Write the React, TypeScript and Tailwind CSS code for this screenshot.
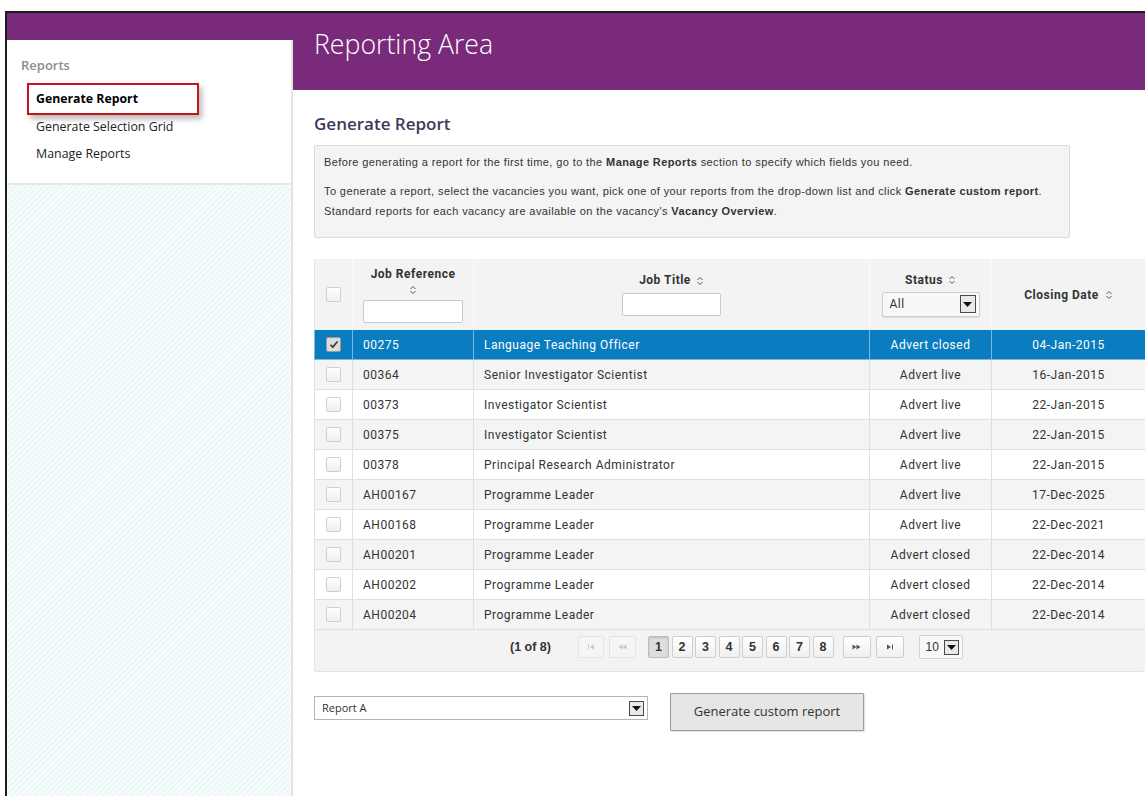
import React from "react";

type Row = { ref: string; title: string; status: string; date: string };

const rows: Row[] = [
  { ref: "00275", title: "Language Teaching Officer", status: "Advert closed", date: "04-Jan-2015" },
  { ref: "00364", title: "Senior Investigator Scientist", status: "Advert live", date: "16-Jan-2015" },
  { ref: "00373", title: "Investigator Scientist", status: "Advert live", date: "22-Jan-2015" },
  { ref: "00375", title: "Investigator Scientist", status: "Advert live", date: "22-Jan-2015" },
  { ref: "00378", title: "Principal Research Administrator", status: "Advert live", date: "22-Jan-2015" },
  { ref: "AH00167", title: "Programme Leader", status: "Advert live", date: "17-Dec-2025" },
  { ref: "AH00168", title: "Programme Leader", status: "Advert live", date: "22-Dec-2021" },
  { ref: "AH00201", title: "Programme Leader", status: "Advert closed", date: "22-Dec-2014" },
  { ref: "AH00202", title: "Programme Leader", status: "Advert closed", date: "22-Dec-2014" },
  { ref: "AH00204", title: "Programme Leader", status: "Advert closed", date: "22-Dec-2014" },
];

function SortIcon() {
  return (
    <svg width="8" height="10" viewBox="0 0 8 10" className="inline-block">
      <path d="M1.5 4 L4 1.5 L6.5 4" fill="none" stroke="#555" strokeWidth="1" />
      <path d="M1.5 6 L4 8.5 L6.5 6" fill="none" stroke="#555" strokeWidth="1" />
    </svg>
  );
}

function ArrowBox({ size = "md" }: { size?: "md" | "sm" }) {
  const box = size === "md" ? "h-[18px] w-[16px]" : "h-[15px] w-[15px]";
  return (
    <span className={`flex ${box} items-center justify-center border border-[#4a4a4a] bg-[#e9e9e9]`}>
      <svg width="9" height="5" viewBox="0 0 9 5">
        <path d="M0 0 L9 0 L4.5 5 Z" fill="#111" />
      </svg>
    </span>
  );
}

function CheckBox({ checked = false }: { checked?: boolean }) {
  return (
    <span
      className={`flex h-[15px] w-[15px] items-center justify-center rounded-[2px] border ${
        checked ? "border-[#9a9a9a] bg-[#dcdcdc]" : "border-[#cfcfcf] bg-gradient-to-b from-white to-[#efefef]"
      }`}
    >
      {checked && (
        <svg width="10" height="9" viewBox="0 0 10 9">
          <path d="M1.5 4.8 L3.8 7 L8.5 1.5" fill="none" stroke="#333" strokeWidth="1.6" />
        </svg>
      )}
    </span>
  );
}

function PagerGlyph({ kind }: { kind: "first" | "prev" | "next" | "last" }) {
  const fill = kind === "first" || kind === "prev" ? "#c4c4c4" : "#555";
  return (
    <svg width="9" height="6" viewBox="0 0 9 6">
      {kind === "first" && (
        <>
          <rect x="1" y="0.5" width="1" height="5" fill={fill} />
          <path d="M7 0.5 L3 3 L7 5.5 Z" fill={fill} />
        </>
      )}
      {kind === "prev" && (
        <>
          <path d="M4.5 0.5 L0.5 3 L4.5 5.5 Z" fill={fill} />
          <path d="M8.5 0.5 L4.5 3 L8.5 5.5 Z" fill={fill} />
        </>
      )}
      {kind === "next" && (
        <>
          <path d="M0.5 0.5 L4.5 3 L0.5 5.5 Z" fill={fill} />
          <path d="M4.5 0.5 L8.5 3 L4.5 5.5 Z" fill={fill} />
        </>
      )}
      {kind === "last" && (
        <>
          <path d="M2 0.5 L6 3 L2 5.5 Z" fill={fill} />
          <rect x="7" y="0.5" width="1" height="5" fill={fill} />
        </>
      )}
    </svg>
  );
}

const cols = "grid grid-cols-[38px_121px_396px_122px_154px]";
const pageBtn = "border-[#cfcfcf] bg-gradient-to-b from-white to-[#f0f0f0]";

export default function App() {
  return (
    <div className="h-[796px] w-[1145px] overflow-hidden bg-white pl-[5px] pt-[11px] font-['Open_Sans',sans-serif]">
      <div className="flex h-[785px] border-l-2 border-t-2 border-[#1c1c1c]">
        {/* left navigation */}
        <aside className="flex w-[286px] shrink-0 flex-col">
          <div className="h-[27px] bg-[#792a7a]" />
          <div className="flex flex-1 flex-col border-r-2 border-[#e3e3e3]">
            <div className="bg-white pb-[20px] pl-[14px] pt-[16px]">
              <div className="text-[13px] font-semibold leading-[18px] text-[#8c8c8c]">Reports</div>
              <div className="ml-[6px] mt-[9px] flex h-[32px] w-[172px] items-center border-2 border-[#c4161c] pl-[7px] shadow-[3px_4px_6px_rgba(0,0,0,0.28)]">
                <span className="text-[12.3px] font-bold leading-[18px] text-black">Generate Report</span>
              </div>
              <div className="ml-[15px] mt-[3px] text-[12.4px] leading-[18px] text-[#222]">Generate Selection Grid</div>
              <div className="ml-[15px] mt-[9px] text-[12.4px] leading-[18px] text-[#222]">Manage Reports</div>
            </div>
            <div className="flex-1 border-t-2 border-[#e8e8e8] bg-[repeating-linear-gradient(135deg,#f7fcfc_0px,#f7fcfc_2px,#ecf7f7_2px,#ecf7f7_4px)]" />
          </div>
        </aside>

        {/* main area */}
        <main className="flex min-w-0 flex-1 flex-col">
          <header className="h-[77px] bg-[#792a7a] pl-[21px] pt-[14px]">
            <h1 className="text-[26.7px] font-light leading-[34px] text-white">Reporting Area</h1>
          </header>

          <div className="pl-[21px]">
            <h2 className="mt-[22px] text-[17px] font-semibold leading-[24px] text-[#3b3a5c]">Generate Report</h2>

            <div className="mt-[9px] h-[93px] w-[756px] rounded-[2px] border border-[#dcdcdc] bg-[#f4f4f4] pl-[9px] pt-[6px] font-['Liberation_Sans',Arial,sans-serif] text-[11px] leading-[20px] tracking-[0.4px] text-[#333]">
              <p>
                Before generating a report for the first time, go to the <b>Manage Reports</b> section to specify which fields you need.
              </p>
              <p className="mt-[9px]">
                To generate a report, select the vacancies you want, pick one of your reports from the drop-down list and click{" "}
                <b>Generate custom report</b>.
                <br />
                Standard reports for each vacancy are available on the vacancy's <b>Vacancy Overview</b>.
              </p>
            </div>

            {/* vacancy table */}
            <div className="mt-[21px] w-[831px] font-['Roboto',sans-serif] text-[12px] tracking-[0.5px] text-[#333]">
              <div className={`${cols} h-[71px] bg-[#f3f3f3]`}>
                <div className="flex items-center justify-center border-l border-[#e2e2e2]">
                  <CheckBox />
                </div>
                <div className="flex flex-col items-center justify-center border-l border-[#fafafa]">
                  <span className="font-bold leading-[15px]">Job Reference</span>
                  <span className="mt-[2px] leading-[12px]">
                    <SortIcon />
                  </span>
                  <span className="mt-[4px] h-[23px] w-[100px] rounded-[2px] border border-[#c9c9c9] bg-white" />
                </div>
                <div className="flex flex-col items-center justify-center border-l border-[#fafafa]">
                  <span className="flex items-center gap-[5px] font-bold leading-[15px]">
                    Job Title <SortIcon />
                  </span>
                  <span className="mt-[5px] h-[23px] w-[99px] rounded-[2px] border border-[#c9c9c9] bg-white" />
                </div>
                <div className="flex flex-col items-center justify-center border-l border-[#fafafa]">
                  <span className="flex items-center gap-[5px] font-bold leading-[15px]">
                    Status <SortIcon />
                  </span>
                  <span className="mt-[4px] flex h-[25px] w-[98px] items-center justify-between rounded-[2px] border border-[#cfcfcf] bg-[#f8f8f8] pl-[7px] pr-[3px] shadow-[0_1px_1px_rgba(0,0,0,0.08)]">
                    <span className="text-[12px] text-[#333]">All</span>
                    <ArrowBox />
                  </span>
                </div>
                <div className="flex items-center justify-center border-l border-[#fafafa]">
                  <span className="flex items-center gap-[6px] font-bold">
                    Closing Date <SortIcon />
                  </span>
                </div>
              </div>

              {rows.map((r, i) => {
                const selected = i === 0;
                const bg = selected ? "bg-[#0a7cc0] text-white" : i % 2 === 1 ? "bg-[#f4f4f4]" : "bg-white";
                const sep = selected ? "border-[#7fb8de]" : "border-[#e0e0e0]";
                return (
                  <div key={r.ref} className={`${cols} h-[30px] border-b ${sep} ${bg}`}>
                    <div className={`flex items-center justify-center border-l ${sep}`}>
                      <CheckBox checked={selected} />
                    </div>
                    <div className={`flex items-center border-l ${sep} pl-[10px]`}>{r.ref}</div>
                    <div className={`flex items-center border-l ${sep} pl-[10px]`}>{r.title}</div>
                    <div className={`flex items-center justify-center border-l ${sep}`}>{r.status}</div>
                    <div className={`flex items-center justify-center border-l ${sep}`}>{r.date}</div>
                  </div>
                );
              })}

              {/* pager */}
              <div className="flex h-[42px] items-start rounded-b-[3px] border-b border-l border-[#e3e3e3] bg-[#f3f3f3] pl-[195px] pt-[6px] font-['Liberation_Sans',Arial,sans-serif] text-[12.5px] font-bold tracking-normal text-[#333]">
                <span className="flex h-[22px] w-[44px] items-center">(1 of 8)</span>
                <span className="ml-[24px] flex h-[22px] w-[26px] items-center justify-center rounded-[2px] border border-[#e3e3e3] bg-[#f5f5f5]">
                  <PagerGlyph kind="first" />
                </span>
                <span className="ml-[5px] flex h-[22px] w-[27px] items-center justify-center rounded-[2px] border border-[#e3e3e3] bg-[#f5f5f5]">
                  <PagerGlyph kind="prev" />
                </span>
                <div className="ml-[12px] flex gap-[2.5px]">
                  {["1", "2", "3", "4", "5", "6", "7", "8"].map((p) => (
                    <span
                      key={p}
                      className={`flex h-[22px] w-[21px] items-center justify-center rounded-[2px] border ${
                        p === "1" ? "border-[#bdbdbd] bg-[#dedede] shadow-[inset_0_1px_2px_rgba(0,0,0,0.15)]" : pageBtn
                      }`}
                    >
                      {p}
                    </span>
                  ))}
                </div>
                <span className={`ml-[9px] flex h-[22px] w-[28px] items-center justify-center rounded-[2px] border ${pageBtn}`}>
                  <PagerGlyph kind="next" />
                </span>
                <span className={`ml-[5px] flex h-[22px] w-[28px] items-center justify-center rounded-[2px] border ${pageBtn}`}>
                  <PagerGlyph kind="last" />
                </span>
                <span className="-mt-[1px] ml-[15px] flex h-[24px] w-[44px] items-center justify-between rounded-[2px] border border-[#d4d4d4] bg-[#f8f8f8] pl-[6px] pr-[3px] font-normal">
                  <span className="text-[12px]">10</span>
                  <ArrowBox size="sm" />
                </span>
              </div>
            </div>

            {/* report picker */}
            <div className="flex items-start">
              <div className="mt-[24px] flex h-[24px] w-[334px] items-center justify-between border border-[#b5b5b5] bg-white pl-[7px] pr-[3px]">
                <span className="text-[11px] text-[#333]">Report A</span>
                <ArrowBox size="sm" />
              </div>
              <button className="ml-[22px] mt-[21px] h-[38px] w-[194px] rounded-[1px] border border-[#9c9c9c] bg-[#e6e6e6] text-[13px] text-[#333] shadow-[1px_1px_1px_rgba(0,0,0,0.12)]">
                Generate custom report
              </button>
            </div>
          </div>
        </main>
      </div>
    </div>
  );
}
